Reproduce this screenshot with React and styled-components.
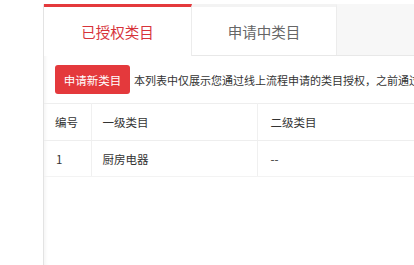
import React from "react";
import styled, { createGlobalStyle } from "styled-components";

const GlobalStyle = createGlobalStyle`
  html, body {
    margin: 0;
    padding: 0;
    background: #fff;
    overflow: hidden;
  }
  body {
    font-family: "Noto Sans CJK SC", "Noto Sans", sans-serif;
    color: #333;
  }
`;

const Page = styled.div`
  display: flex;
  padding: 4px 0 0 43px;
  height: 265px;
  box-sizing: border-box;
  overflow: hidden;
`;

const Panel = styled.div`
  flex: 1;
  min-width: 0;
  display: flex;
  flex-direction: column;
  border-left: 1px solid #e3e3e3;
  border-top: 1px solid #f0f0f0;
  box-shadow: inset 4px 0 4px -3px rgba(0, 0, 0, 0.06);
  background: #fff;
`;

const TabBar = styled.div`
  display: flex;
  height: 51px;
  background: #f7f7f7;
  border-bottom: 1px solid #e8e8e8;
  margin-top: -1px;
`;

const Tab = styled.div`
  width: 148px;
  box-sizing: border-box;
  display: flex;
  align-items: center;
  justify-content: center;
  background: #fff;
  border-top: 3px solid ${(p) => (p.$active ? "#e4393c" : "#f3f3f3")};
  border-right: 1px solid #ececec;
  margin-bottom: ${(p) => (p.$active ? "-1px" : "0")};
  font-size: 14.5px;
  color: ${(p) => (p.$active ? "#d7333a" : "#666")};
  cursor: pointer;
  &:nth-child(2) {
    width: 145px;
  }
`;

const Toolbar = styled.div`
  display: flex;
  align-items: center;
  padding: 9px 11px;
  white-space: nowrap;
  overflow: hidden;
`;

const Button = styled.button`
  flex: none;
  width: 75px;
  height: 29px;
  padding: 0;
  border: none;
  border-radius: 3px;
  background: #e4393c;
  color: #fff;
  font-family: inherit;
  font-size: 11.5px;
  cursor: pointer;
`;

const Note = styled.span`
  margin-left: 4px;
  font-size: 11px;
  color: #333;
`;

const Table = styled.table`
  width: 100%;
  border-collapse: collapse;
  table-layout: fixed;
  font-size: 11.5px;
  color: #333;
`;

const HeadCell = styled.th`
  height: 36px;
  padding: 0 0 0 ${(p) => p.$pad || 11}px;
  text-align: left;
  font-weight: normal;
  border-top: 1px solid #eeeeee;
  border-bottom: 1px solid #eeeeee;
  border-right: 1px solid #f0f0f0;
  &:last-child {
    border-right: none;
  }
`;

const Cell = styled.td`
  height: 35px;
  padding: 0 0 0 ${(p) => p.$pad || 11}px;
  text-align: left;
  border-bottom: 1px solid #f3f3f3;
  border-right: 1px solid #f0f0f0;
  &:last-child {
    border-right: none;
  }
`;

const Filler = styled.div`
  flex: 1;
`;

export default function App() {
  return (
    <>
      <GlobalStyle />
      <Page>
        <Panel>
          <TabBar>
            <Tab $active>已授权类目</Tab>
            <Tab>申请中类目</Tab>
          </TabBar>
          <Toolbar>
            <Button>申请新类目</Button>
            <Note>本列表中仅展示您通过线上流程申请的类目授权，之前通过线下流程申请的类目授权请联系您的对接人</Note>
          </Toolbar>
          <Table>
            <colgroup>
              <col style={{ width: 47 }} />
              <col style={{ width: 166 }} />
              <col />
            </colgroup>
            <thead>
              <tr>
                <HeadCell>编号</HeadCell>
                <HeadCell>一级类目</HeadCell>
                <HeadCell $pad={13}>二级类目</HeadCell>
              </tr>
            </thead>
            <tbody>
              <tr>
                <Cell $pad={12}>1</Cell>
                <Cell>厨房电器</Cell>
                <Cell $pad={13}>--</Cell>
              </tr>
            </tbody>
          </Table>
          <Filler />
        </Panel>
      </Page>
    </>
  );
}
